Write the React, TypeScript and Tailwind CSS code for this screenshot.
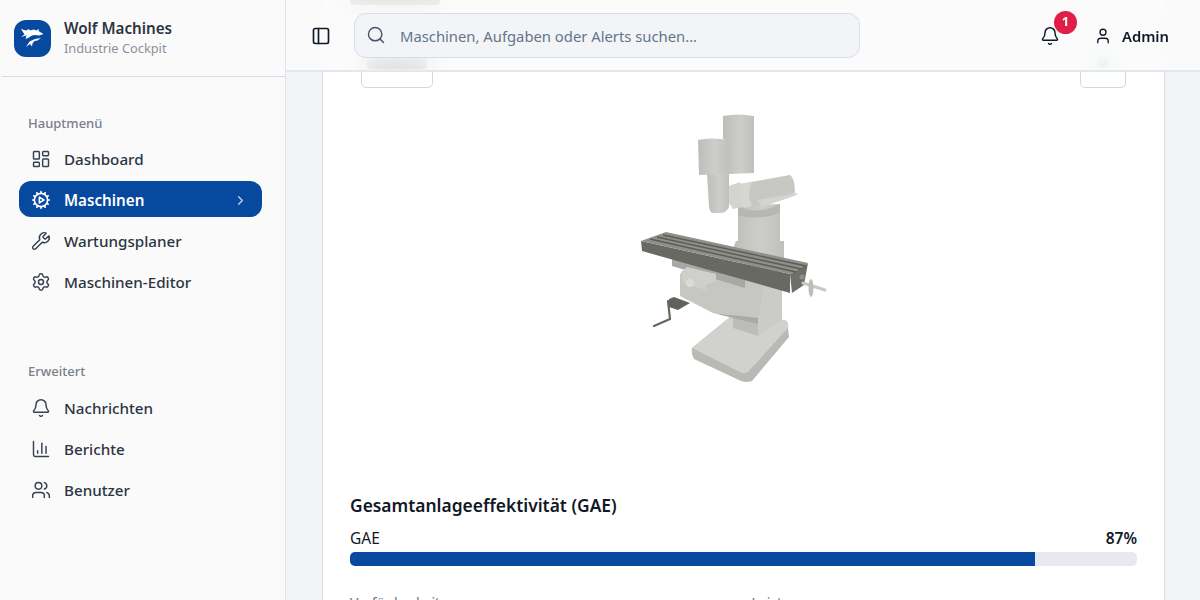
import { Bell, ChartColumn, ChevronRight, LayoutDashboard, PanelLeft, Search, Settings, User, Users, Wrench } from 'lucide-react';

const teeth = [
  'M12 2v2', 'M12 22v-2', 'M17 3.34l-1 1.73', 'M7 20.66l1-1.73', 'M20.66 7l-1.73 1', 'M3.34 17l1.73-1',
  'M22 12h-2', 'M2 12h2', 'M20.66 17l-1.73-1', 'M3.34 7l1.73 1', 'M17 20.66l-1-1.73', 'M7 3.34l1 1.73',
];

function MachineCog() {
  return (
    <svg width="20" height="20" viewBox="0 0 24 24" fill="none" stroke="currentColor" strokeWidth="2" strokeLinecap="round" strokeLinejoin="round">
      <circle cx="12" cy="12" r="8" />
      {teeth.map(d => <path key={d} d={d} />)}
      <path d="M10 8.5v7l5.5-3.5z" />
    </svg>
  );
}

function WolfLogo() {
  return (
    <div className="w-[37px] h-[37px] rounded-xl bg-[#07499e] flex items-center justify-center shrink-0">
      <svg width="23" height="20" viewBox="0 0 23 20" fill="white">
        <path d="M0 1l5 1.5L8 1l1 1.5 4-1 2 1 3-1.5-.5 2 5 3-4.5 1.5-4-.5-3 .5-4 2.5-2.5 1 1-3.5L0 9l3.5-2.5z" />
        <path d="M5 19l3.5-5.5 5.5-2.5 6-1-3.5 2.5-3 .5-2 2.5-.5 3-2-2.5z" />
      </svg>
    </div>
  );
}

function NavItem({ icon, label, active }: { icon: React.ReactNode; label: string; active?: boolean }) {
  return (
    <div className={`h-9 rounded-xl pl-3 pr-[14px] pt-[2px] flex items-center gap-[13px] text-[15.2px] ${active ? 'bg-[#07499e] text-white font-semibold' : 'text-[#2b3442] font-medium'}`}>
      <span className={active ? 'text-white' : 'text-[#374151]'}>{icon}</span>
      <span>{label}</span>
      {active && <ChevronRight size={15} className="ml-auto text-[#c5d3e8]" />}
    </div>
  );
}

function Sidebar() {
  return (
    <aside className="w-[286px] shrink-0 h-full bg-[#fafafa] border-r border-[#dde3ef]">
      <div className="h-[77px] ml-0.5 border-b border-[#d3dcec] flex items-center gap-[13px] pl-3">
        <WolfLogo />
        <div>
          <div className="text-[15.2px] leading-5 font-semibold text-[#2b3442]">Wolf Machines</div>
          <div className="text-[12.8px] leading-5 text-[#8b919c]">Industrie Cockpit</div>
        </div>
      </div>
      <div className="pl-[19px] pr-[23px] pt-9">
        <div className="pl-[9px] h-5 text-[13px] leading-5 font-medium text-[#7a7f8a]">Hauptmenü</div>
        <nav className="mt-[7px] flex flex-col gap-[5px]">
          <NavItem icon={<LayoutDashboard size={20} strokeWidth={1.75} />} label="Dashboard" />
          <NavItem icon={<MachineCog />} label="Maschinen" active />
          <NavItem icon={<Wrench size={20} strokeWidth={1.75} />} label="Wartungsplaner" />
          <NavItem icon={<Settings size={20} strokeWidth={1.75} />} label="Maschinen-Editor" />
        </nav>
        <div className="mt-[62px] pl-[9px] h-5 text-[13px] leading-5 font-medium text-[#7a7f8a]">Erweitert</div>
        <nav className="mt-2 flex flex-col gap-[5px]">
          <NavItem icon={<Bell size={20} strokeWidth={1.75} />} label="Nachrichten" />
          <NavItem icon={<ChartColumn size={20} strokeWidth={1.75} />} label="Berichte" />
          <NavItem icon={<Users size={20} strokeWidth={1.75} />} label="Benutzer" />
        </nav>
      </div>
    </aside>
  );
}

function Header() {
  return (
    <header className="absolute top-0 inset-x-0 h-[72px] z-10 bg-[#fafafa]/85 backdrop-blur-md border-b-2 border-[#e3e7ef] flex items-center pl-[25px] pr-[31px]">
      <PanelLeft size={20} strokeWidth={2} className="text-[#111827] mt-px" />
      <div className="ml-[23px] w-[506px] h-[45px] rounded-xl bg-[#f3f4f7] border border-[#d5dcea] flex items-center pl-[11px] gap-[14px]">
        <Search size={20} strokeWidth={1.75} className="text-[#475569]" />
        <span className="text-[14.8px] pt-[3px] text-[#64748b]">Maschinen, Aufgaben oder Alerts suchen...</span>
      </div>
      <div className="ml-auto relative mr-[34px] mt-px">
        <Bell size={20} strokeWidth={1.75} className="text-[#111827]" />
        <span className="absolute -top-[15px] left-[14px] w-[23px] h-[23px] rounded-full bg-[#e11d48] text-white text-[13px] font-bold flex items-center justify-center">1</span>
      </div>
      <User size={18} strokeWidth={1.75} className="text-[#111827] mt-px" />
      <span className="ml-[10px] pt-[3px] text-[14.8px] font-semibold text-[#111827]">Admin</span>
    </header>
  );
}

function MillingMachine() {
  return (
    <svg viewBox="350 87 787 393" className="block w-full h-[393px]">
      <defs>
        <linearGradient id="cyl" x1="0" x2="1" y1="0" y2="0">
          <stop offset="0" stopColor="#bdbdb9" />
          <stop offset="0.55" stopColor="#cdcdca" />
          <stop offset="1" stopColor="#bfbfbb" />
        </linearGradient>
      </defs>
      {/* base */}
      <path d="M692 347L730 316L785 319Q789 322 788 327L789 336L752 380Q746 382 741 380L694 358Q691 353 692 347Z" fill="#b9b9b5" />
      <path d="M692 347L730 316L785 319Q789 322 788 327L748 371Q744 373 740 371Z" fill="#d1d1ce" />
      {/* column */}
      <path d="M733 317L733 327L758 335L782 318L782 268L740 262Z" fill="#bcbcb8" />
      <path d="M763 283L782 280L782 318L758 335L758 317Z" fill="#cbcbc7" />
      {/* knee */}
      <path d="M680 273L680 295L713 312L758 317L763 283L700 262Z" fill="#c6c6c2" />
      <path d="M713 312L758 317L758 323L733 317Z" fill="#a9a9a5" />
      <path d="M672 257L672 265L745 287L745 273Z" fill="#a8a8a4" />
      <path d="M681 271L687 266L716 273L716 280L706 284L706 289L683 282Z" fill="#cfcfcb" />
      <circle cx="690" cy="282" r="4" fill="#dadad7" />
      {/* crank */}
      <path d="M669 298L674 296L690 302L678 309L669 306Z" fill="#62625d" />
      <path d="M668 300L670 318L654 325" fill="none" stroke="#66665f" strokeWidth="2.2" strokeLinejoin="round" strokeLinecap="round" />
      {/* upper column */}
      <path d="M738 205L780 203L780 240L784 240L784 262L732 250L736 240L738 240Z" fill="url(#cyl)" />
      <path d="M738 205Q758 215 780 203L780 212Q758 220 738 214Z" fill="#b6b6b2" />
      {/* table */}
      <path d="M641 240L790 273L790 292L642 250Z" fill="#696963" />
      <path d="M790 273L808 262L804 284L792 292Z" fill="#6f6f69" />
      <path d="M641 240L666 231L808 262L790 273Z" fill="#8f8f89" />
      <path d="M650 238L796 271M657 236L801 268M663 234L806 265" stroke="#5c5c57" strokeWidth="1.4" />
      {/* hand wheel */}
      <path d="M803 282L825 289" stroke="#c8c8c5" strokeWidth="3" strokeLinecap="round" />
      <ellipse cx="811" cy="287" rx="2.5" ry="9" fill="#bdbdb9" />
      <circle cx="802" cy="276" r="2.5" fill="#8e8e89" />
      {/* head */}
      <path d="M707 172L729 172L729 206Q726 212 720 212L713 212Q710 212 709 206Z" fill="url(#cyl)" />
      <path d="M723 115Q738 112 754 115L754 172L729 173L729 140L723 138Z" fill="url(#cyl)" />
      <path d="M698 139Q711 136 729 139L729 173L699 174Z" fill="url(#cyl)" />
      {/* ram */}
      <path d="M729 185L740 181L746 205L733 208L729 202Z" fill="#d3d3d0" />
      <path d="M740 183L790 174Q795 177 795 192L762 205L744 207Q736 195 740 183Z" fill="#c7c7c3" />
      <path d="M740 183Q736 195 744 207L752 205Q746 193 752 181Z" fill="#d6d6d3" />
      <path d="M757 199L797 192L797 194L762 206Z" fill="#d3d3d0" />
    </svg>
  );
}

export default function App() {
  return (
    <div className="h-[600px] w-[1200px] flex overflow-hidden bg-[#f3f4f6] font-['Noto_Sans',sans-serif]">
      <Sidebar />
      <main className="relative flex-1 min-w-0 h-full overflow-hidden">
        <Header />
        <div className="pl-9 pr-[35px] -mt-[40px]">
          <div className="bg-white border border-[#d8e0ee] rounded-xl px-[27px] pt-[28px]">
            {/* card title, only seen blurred behind the header */}
            <div className="h-4 w-[90px] rounded bg-[#333]" />
            <div className="mt-[31px] mx-[11px] flex justify-between">
              <div className="w-[72px] h-[52px] border border-[#d5d8de] rounded-[5px] flex items-center justify-center">
                <span className="block w-[60px] h-[14px] rounded bg-[#333]" />
              </div>
              <div className="w-[46px] h-[52px] border border-[#d5d8de] rounded-[5px] flex items-center justify-center">
                <span className="w-3 h-3 rounded-full bg-[#16a34a]" />
              </div>
            </div>
            <MillingMachine />
            <h3 className="mt-[11px] text-[17.4px] leading-[26px] font-semibold text-[#111827]">Gesamtanlageeffektivität (GAE)</h3>
            <div className="mt-[9px] flex justify-between items-center h-6 text-[15.5px] text-[#111827]">
              <span>GAE</span>
              <span className="font-semibold">87%</span>
            </div>
            <div className="mt-px h-[14px] rounded-[5px] bg-[#e8e9ee] overflow-hidden">
              <div className="h-full bg-[#07499e] w-[87%]" />
            </div>
            <div className="mt-[27px] grid grid-cols-2 gap-4 text-sm text-[#6b7280] pb-10">
              <span>Verfügbarkeit</span>
              <span>Leistung</span>
            </div>
          </div>
        </div>
      </main>
    </div>
  );
}
